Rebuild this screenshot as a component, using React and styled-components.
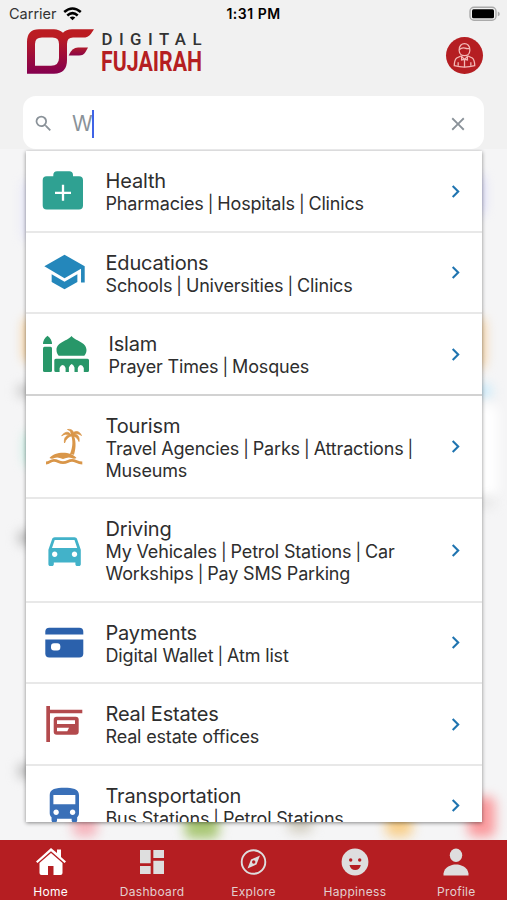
import React from "react";
import styled, { createGlobalStyle } from "styled-components";
import { MdSearch, MdClose, MdDashboard, MdChevronRight } from "react-icons/md";

const COLORS = {
  red: "#b51e22",
  text: "#2e2e2e",
  header_bg: "#f1f1f1",
  page_bg: "#f5f5f6",
  link: "#1f74b0",
};

const HealthIcon = () => (
  <svg width="50" height="48" viewBox="0 0 50 48">
    <path d="M13.3 9.2V8q0-3.8 3.8-3.8h12.1q3.8 0 3.8 3.8v1.2h6q4 0 4 4v25.3q0 4-4 4H6.7q-4 0-4-4V13.2q0-4 4-4z" fill="#2fa192" />
    <path d="M23 17.8v16M15 25.8h16" stroke="white" strokeWidth="2.3" />
  </svg>
);

const EducationIcon = () => (
  <svg width="50" height="48" viewBox="0 0 50 48">
    <g transform="translate(2.5 0) scale(1.835 1.92)" fill="#2487bb">
      <path d="M5 13.180v4L12 21l7-3.820v-4L12 17l-7-3.820zM12 3L1 9l11 6.200 9-4.910V17.500h2V9L12 3z" />
    </g>
  </svg>
);

const IslamIcon = () => (
  <svg width="50" height="48" viewBox="0 0 50 48" fill="#289769">
    <path d="M7.5 5.7q4.500 3.500 4.500 8.300H3q0-4.800 4.500-8.300z" />
    <rect x="3" y="16.7" width="9" height="25.3" rx="1.5" />
    <path d="M31.500 6c3 4.500 15 6 15 14 0 3-1.300 4.300-2.200 5.700H18.700c-.9-1.400-2.200-2.700-2.200-5.700 0-8 12-9.500 15-14z" />
    <path d="M15.800 28.700h31.700q1.500 0 1.500 1.500v10.300q0 1.500-1.500 1.500h-3.700v-4q-1.200-3-3-3-2 0-3 3v4h-3.300v-4.500q-1-3-2.800-3.500-1.800.5-2.800 3.500V42h-3.300v-4q-1-3-3-3-1.800 0-3 3v4h-3.800q-1.500 0-1.500-1.500V30.200q0-1.500 1.500-1.500z" />
  </svg>
);

const TourismIcon = () => (
  <svg width="50" height="48" viewBox="0 0 50 48" fill="#d99649">
    <path d="M30.500 11c2.700 6 2.500 12.500-.5 20l4 .8c2.400-8 2-15-.8-20.800z" />
    <g stroke="#d99649" strokeWidth="0.8" strokeLinejoin="round">
      <path d="M31 12c-2.500-4-6-3.500-9.300.8 3-2 5.500-2 7.600-.6-3.500.3-5.500 3-4.800 7.800 1.500-4 3.500-6 6.500-7 4-.5 6.500 2 8 5.500.7-4.500-1.200-7-4.300-7.300 2.500-1 4.600-.2 6.800 1.300-2-4-5-5-8-3C33 7 30.500 6 27.500 6.500c2.500 1 4 2.500 3.500 5.500z" />
    </g>
    <path d="M9.500 35C15 28 31 28 36.500 35q-2.500 1.300-5 0-3-1.600-8.500 1-5.500-2.600-8.500-1-2.500 1.300-5 0z" />
    <path d="M6 40c4 0 4-2.600 8-2.600s4.500 2.300 9 2.300 5-2.300 9-2.300 5 2.600 10.300 2.600" fill="none" stroke="#d99649" strokeWidth="2.800" />
  </svg>
);

const DrivingIcon = () => (
  <svg width="50" height="48" viewBox="0 0 50 48">
    <g transform="translate(3 2.2) scale(1.8)" fill="#42b2c9">
      <path d="M18.920 6.010C18.720 5.420 18.160 5 17.500 5h-11c-.66 0-1.210.42-1.420 1.010L3 12v8c0 .55.45 1 1 1h1c.55 0 1-.45 1-1v-1h12v1c0 .55.45 1 1 1h1c.55 0 1-.45 1-1v-8l-2.080-5.990zM6.500 16c-.83 0-1.500-.67-1.500-1.500S5.670 13 6.500 13s1.500.67 1.500 1.500S7.330 16 6.500 16zm11 0c-.83 0-1.500-.67-1.500-1.500s.67-1.500 1.500-1.500 1.500.67 1.500 1.500-.67 1.500-1.500 1.500zM5 11l1.500-4.500h11L19 11H5z" />
    </g>
  </svg>
);

const PaymentIcon = () => (
  <svg width="50" height="48" viewBox="0 0 50 48" fill="#2b61ac">
    <path d="M5.300 15.600v-2.800q0-4 4-4h30q4 0 4 4v2.800z" />
    <path d="M5.300 20.600h38v13.800q0 4-4 4h-30q-4 0-4-4z" />
    <rect x="11" y="24.2" width="9.3" height="7.4" rx="3" fill="white" />
  </svg>
);

const EstateIcon = () => (
  <svg width="50" height="48" viewBox="0 0 50 48" fill="#b34a4d">
    <path d="M6.300 6H10v3.700h32.300v3.600H10V42H6.300z" />
    <rect x="13.7" y="16.7" width="25" height="18" rx="3" />
    <path d="M17 20.300h18V24H17zM17 27.700h12l-1.700 3.500H17z" fill="white" />
  </svg>
);

const BusIcon = () => (
  <svg width="50" height="48" viewBox="0 0 50 48">
    <g transform="translate(2.4 2) scale(1.83)" fill="#3a70b8">
      <path d="M4 16c0 .88.39 1.670 1 2.220V20c0 .55.45 1 1 1h1c.55 0 1-.45 1-1v-1h8v1c0 .55.45 1 1 1h1c.55 0 1-.45 1-1v-1.780c.61-.55 1-1.340 1-2.220V6c0-3.500-3.580-4-8-4s-8 .5-8 4v10zm3.500 1c-.83 0-1.500-.67-1.500-1.500S6.670 14 7.500 14s1.500.67 1.500 1.500S8.330 17 7.500 17zm9 0c-.83 0-1.500-.67-1.500-1.500s.67-1.500 1.500-1.500 1.500.67 1.500 1.500-.67 1.500-1.500 1.500zm1.500-6H6V6h12v5z" />
    </g>
  </svg>
);

const Logo = () => (
  <svg width="180" height="60" viewBox="0 0 180 60">
    <defs>
      <linearGradient id="brand" x1="0" y1="0" x2="0" y2="1">
        <stop offset="0.15" stopColor="#bb1c22" />
        <stop offset="1" stopColor="#85004f" />
      </linearGradient>
      <linearGradient id="leaf" x1="0" y1="0" x2="0" y2="1">
        <stop offset="0" stopColor="#b01a2b" />
        <stop offset="1" stopColor="#8a0548" />
      </linearGradient>
    </defs>
    <path
      d="M0 46.700V15Q0 2.300 12 2.300H27Q32 2.300 36 5.800 39 2.300 45 2.300H67L64 6.700Q61 10.600 56 10.600H46Q40 10.600 40 17V33Q40 46.700 27 46.700ZM8 38.700H24Q32 38.700 32 31V17Q32 10.600 25.500 10.600H15Q8 10.600 8 17Z"
      fill="url(#brand)"
      fillRule="evenodd"
    />
    <path d="M41.700 28.500Q45 20.600 51 20.600H61L58.500 25Q56.500 28.500 52 28.500Z" fill="url(#leaf)" />
    <LogoText x="74.5" y="17.8" textLength="100" $size={16.8} $color="#333">
      DIGITAL
    </LogoText>
    <LogoText x="74" y="43.8" textLength="101" lengthAdjust="spacingAndGlyphs" $size={28.5} $bold $color={COLORS.red}>
      FUJAIRAH
    </LogoText>
  </svg>
);

const WifiIcon = () => (
  <svg width="19" height="14" viewBox="0 0 19 14" fill="none" stroke="black" strokeWidth="2.6">
    <path d="M1.200 5Q9.500-2 17.800 5" />
    <path d="M4.300 8.400Q9.500 4 14.700 8.400" />
    <path d="M9.500 13.300L6.700 10.500Q9.500 8.300 12.300 10.500Z" fill="black" stroke="none" />
  </svg>
);

const BatteryIcon = () => (
  <svg width="32" height="16" viewBox="0 0 32 16">
    <rect x="1" y="1.2" width="26" height="13" rx="4" fill="none" stroke="#aaa" strokeWidth="1.4" />
    <rect x="3" y="3.2" width="22" height="9" rx="1.5" fill="black" />
    <path d="M28.800 5.500q2 .7 2 2.400t-2 2.400z" fill="#aaa" />
  </svg>
);

const PersonIcon = () => (
  <svg width="37" height="37" viewBox="0 0 38 38" fill="none" stroke="#f3b9b6" strokeWidth="1.3">
    <path d="M13.500 13.500C13 4.500 25 4.500 24.500 13.500 24.500 21 13.500 21 13.500 13.500Z" />
    <path d="M13.500 13q3-2.500 6-1.500t5 0" />
    <path d="M15.500 19.500L19 23l3.500-3.500 4.500 2q2.500 2 2.500 8-10.500 3-21 0 0-6 2.500-8z" />
    <path d="M19 23v8M16 20v3.500l3-.5 3 .5V20M12.500 26v3.500M25.500 26v3.500" />
  </svg>
);

const HomeIcon = () => (
  <svg width="30" height="30" viewBox="0 0 30 30" fill="currentColor">
    <path d="M15 1L0 14.500l1.500 1.500L15 4.200 28.500 16l1.500-1.500-5-4.500V2.500h-4V6z" />
    <path d="M15 6L3.500 16v10q0 2 2 2h6.500v-9h5.500v9h7q2 0 2-2V16z" />
  </svg>
);

const ExploreIcon = () => (
  <svg width="28" height="28" viewBox="0 0 28 28">
    <circle cx="13.5" cy="14" r="11.8" fill="none" stroke="currentColor" strokeWidth="1.9" />
    <path d="M20 7.500l-3.500 9L7.500 20.500l3.500-9zM13.700 12.300a1.700 1.700 0 100 3.400 1.700 1.700 0 000-3.400z" fill="currentColor" fillRule="evenodd" />
  </svg>
);

const SmileIcon = () => (
  <svg width="28" height="28" viewBox="0 0 28 28">
    <circle cx="14" cy="14" r="13.4" fill="currentColor" />
    <circle cx="9.7" cy="12" r="1.7" fill={COLORS.red} />
    <circle cx="18.7" cy="12" r="1.7" fill={COLORS.red} />
    <path d="M8.500 17h11.300q-1 5-5.600 5t-5.700-5z" fill={COLORS.red} />
  </svg>
);

const ProfileIcon = () => (
  <svg width="28" height="28" viewBox="0 0 28 28" fill="currentColor">
    <ellipse cx="14" cy="7.2" rx="6.2" ry="6.7" />
    <path d="M1.500 27.500v-2C2.500 19 9 16.500 14 16.500S25.500 19 26.500 25.500v2z" />
  </svg>
);

const services = [
  { title: "Health", lines: ["Pharmacies | Hospitals | Clinics"], icon: <HealthIcon /> },
  { title: "Educations", lines: ["Schools | Universities | Clinics"], icon: <EducationIcon /> },
  { title: "Islam", lines: ["Prayer Times | Mosques"], icon: <IslamIcon />, indent: 3 },
  { title: "Tourism", lines: ["Travel Agencies | Parks | Attractions |", "Museums"], icon: <TourismIcon /> },
  { title: "Driving", lines: ["My Vehicales | Petrol Stations | Car", "Workships | Pay SMS Parking"], icon: <DrivingIcon /> },
  { title: "Payments", lines: ["Digital Wallet | Atm list"], icon: <PaymentIcon /> },
  { title: "Real Estates", lines: ["Real estate offices"], icon: <EstateIcon /> },
  { title: "Transportation", lines: ["Bus Stations | Petrol Stations"], icon: <BusIcon /> },
];

const tabs = [
  { label: "Home", icon: <HomeIcon />, active: true },
  { label: "Dashboard", icon: <MdDashboard size={32} /> },
  { label: "Explore", icon: <ExploreIcon /> },
  { label: "Happiness", icon: <SmileIcon /> },
  { label: "Profile", icon: <ProfileIcon /> },
];

// blurred home screen content that shows around the dropdown
const blobs = [
  { x: 24, y: 31, w: 12, h: 60, color: "#dfe0fa" },
  { x: 24, y: 169, w: 20, h: 44, color: "#f6c98a" },
  { x: 17, y: 236, w: 30, h: 12, color: "#c4c4c4" },
  { x: 25, y: 283, w: 14, h: 34, color: "#b5ecdc" },
  { x: 18, y: 382, w: 30, h: 14, color: "#b8b8b8" },
  { x: 18, y: 615, w: 30, h: 14, color: "#b8b8b8" },
  { x: 470, y: 26, w: 13, h: 40, color: "#cfcffa" },
  { x: 468, y: 169, w: 17, h: 50, color: "#f6cf9c" },
  { x: 472, y: 236, w: 20, h: 12, color: "#c4e9fb" },
  { x: 470, y: 256, w: 28, h: 90, color: "#fff" },
  { x: 470, y: 351, w: 24, h: 5, color: "#d8d8d8" },
  { x: 73, y: 661, w: 24, h: 27, color: "#f5b4bc" },
  { x: 185, y: 657, w: 34, h: 33, color: "#a9c775" },
  { x: 288, y: 655, w: 24, h: 29, color: "#d3cfc2" },
  { x: 386, y: 659, w: 26, h: 29, color: "#f8cf8b" },
  { x: 468, y: 648, w: 27, h: 40, color: "#fa999c" },
];

const Services = ({ line }) =>
  line.split("|").map((part, i) => (
    <React.Fragment key={i}>
      {i > 0 && <Pipe>|</Pipe>}
      {part}
    </React.Fragment>
  ));

export default function App() {
  return (
    <Screen>
      <GlobalStyle />
      <StatusBar>
        <Carrier>
          Carrier <WifiIcon />
        </Carrier>
        <Time>1:31 PM</Time>
        <BatteryIcon />
      </StatusBar>
      <Header>
        <Logo />
        <Avatar>
          <PersonIcon />
        </Avatar>
      </Header>
      <SearchBox>
        <MdSearch size={21} />
        <Query>W</Query>
        <MdClose size={22} />
      </SearchBox>
      <Body>
        {blobs.map((blob, i) => (
          <Blob key={i} $x={blob.x} $y={blob.y} $w={blob.w} $h={blob.h} $color={blob.color} />
        ))}
        <Dropdown>
          {services.map((service, i) => (
            <Row key={service.title} $dark={i === 2}>
              <IconCell>{service.icon}</IconCell>
              <Info $indent={service.indent || 0}>
                <Title>{service.title}</Title>
                {service.lines.map((line) => (
                  <Line key={line}>
                    <Services line={line} />
                  </Line>
                ))}
              </Info>
              <MdChevronRight size={25} color={COLORS.link} />
            </Row>
          ))}
        </Dropdown>
      </Body>
      <TabBar>
        {tabs.map((tab) => (
          <Tab key={tab.label} $active={tab.active}>
            <TabIcon $active={tab.active}>{tab.icon}</TabIcon>
            {tab.label}
          </Tab>
        ))}
      </TabBar>
    </Screen>
  );
}

const GlobalStyle = createGlobalStyle`
  * {
    box-sizing: border-box;
  }
  body {
    margin: 0;
    font-family: Inter, "Liberation Sans", sans-serif;
  }
  svg {
    display: block;
    flex-shrink: 0;
  }
`;
const Screen = styled.div`
  display: flex;
  flex-direction: column;
  width: 507px;
  height: 900px;
  overflow: hidden;
  background: ${COLORS.header_bg};
`;
const StatusBar = styled.div`
  display: grid;
  grid-template-columns: 1fr auto 1fr;
  align-items: center;
  height: 27px;
  padding: 0 6px 0 9px;
  color: black;
  > svg {
    justify-self: end;
  }
`;
const Carrier = styled.div`
  display: flex;
  align-items: center;
  gap: 6px;
  font-size: 14.5px;
  color: #333;
`;
const Time = styled.div`
  margin-right: 3px;
  font-size: 14px;
  font-weight: 600;
  letter-spacing: 0.5px;
`;
const Header = styled.header`
  display: flex;
  justify-content: space-between;
  height: 69px;
  padding: 0 24px 0 27px;
`;
const LogoText = styled.text`
  font-family: Roboto, sans-serif;
  font-size: ${({ $size }) => $size}px;
  font-weight: ${({ $bold }) => ($bold ? 700 : 500)};
  fill: ${({ $color }) => $color};
`;
const Avatar = styled.div`
  width: 37px;
  height: 37px;
  margin-top: 10px;
  border-radius: 50%;
  background: ${COLORS.red};
`;
const SearchBox = styled.div`
  display: flex;
  align-items: center;
  height: 53px;
  margin: 0 23px;
  padding: 2px 15px 0 10px;
  border-radius: 13px;
  background: white;
  color: #8a9299;
`;
const Query = styled.div`
  flex: 1;
  margin-left: 18px;
  font-size: 21px;
  line-height: 28px;
  letter-spacing: -1px;
  &::after {
    content: "";
    display: inline-block;
    width: 2px;
    height: 28px;
    vertical-align: top;
    background: #3f63e6;
  }
`;
const Body = styled.main`
  position: relative;
  flex: 1;
  overflow: hidden;
  padding: 2px 25px 18px 26px;
  background: ${COLORS.page_bg};
`;
const Blob = styled.div`
  position: absolute;
  left: ${({ $x }) => $x}px;
  top: ${({ $y }) => $y}px;
  width: ${({ $w }) => $w}px;
  height: ${({ $h }) => $h}px;
  border-radius: 6px;
  background: ${({ $color }) => $color};
  filter: blur(6px);
`;
const Dropdown = styled.div`
  position: relative;
  height: 100%;
  overflow: hidden;
  background: white;
  box-shadow: 0 1px 4px rgba(0, 0, 0, 0.45);
`;
const Row = styled.div`
  display: flex;
  align-items: center;
  padding: 17px 14px 16.5px;
  border-bottom: 2px solid ${({ $dark }) => ($dark ? "#d2d2d2" : "#e8e8e8")};
`;
const IconCell = styled.div`
  width: 50px;
  height: 48px;
  margin: -1px 0;
`;
const Info = styled.div`
  flex: 1;
  padding: 1px 0 0 ${({ $indent }) => 15.5 + $indent}px;
  margin-bottom: -1px;
  color: ${COLORS.text};
  white-space: nowrap;
`;
const Title = styled.div`
  font-size: 20px;
  line-height: 24px;
  letter-spacing: -0.17px;
`;
const Line = styled.div`
  font-size: 18px;
  line-height: 22px;
  letter-spacing: -0.17px;
`;
const Pipe = styled.span`
  margin: 0 -0.8px;
  font-size: 17px;
`;
const TabBar = styled.nav`
  display: flex;
  height: 60px;
  background: ${COLORS.red};
`;
const Tab = styled.div`
  flex: 1;
  display: flex;
  flex-direction: column;
  align-items: center;
  padding-top: 7px;
  font-size: 12px;
  line-height: 16px;
  letter-spacing: 0.3px;
  color: ${({ $active }) => ($active ? "white" : "#e3cfcf")};
`;
const TabIcon = styled.div`
  display: flex;
  align-items: center;
  height: 30px;
  margin-bottom: 7px;
  color: ${({ $active }) => ($active ? "white" : "#dedede")};
`;
